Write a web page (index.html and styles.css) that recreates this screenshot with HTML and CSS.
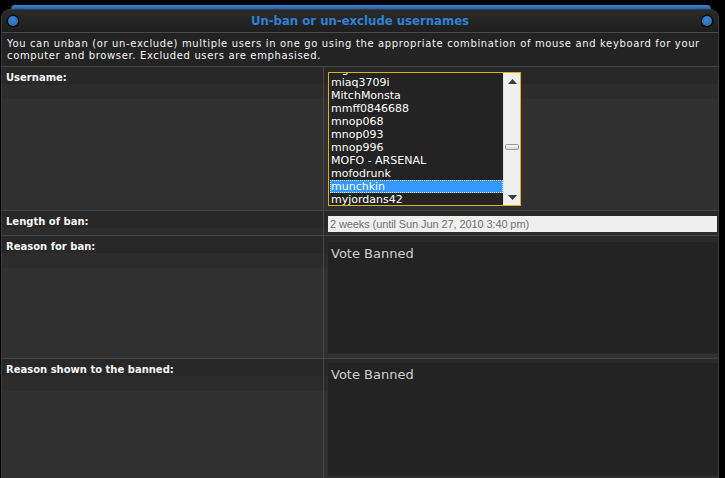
FILE: index.html
```html
<!DOCTYPE html>
<html>
<head>
<meta charset="utf-8">
<link rel="stylesheet" href="styles.css">
</head>
<body>
<div class="panel">
  <div class="topline"></div>
  <div class="head">
    <span class="dot"></span>
    <h2 class="title">Un-ban or un-exclude usernames</h2>
    <span class="dot"></span>
  </div>
  <div class="desc">You can unban (or un-exclude) multiple users in one go using the appropriate combination of mouse and keyboard for your computer and browser. Excluded users are emphasised.</div>

  <div class="row row-user">
    <div class="label">Username:</div>
    <div class="value">
      <div class="listbox">
        <div class="items">
          <div class="item first">mgdavies</div>
          <div class="item">miaq3709i</div>
          <div class="item">MitchMonsta</div>
          <div class="item">mmff0846688</div>
          <div class="item">mnop068</div>
          <div class="item">mnop093</div>
          <div class="item">mnop996</div>
          <div class="item">MOFO - ARSENAL</div>
          <div class="item">mofodrunk</div>
          <div class="item selected">munchkin</div>
          <div class="item">myjordans42</div>
        </div>
        <div class="scrollbar">
          <svg class="arrow" width="9" height="5" viewBox="0 0 9 5"><polygon points="0,5 9,5 4.5,0" fill="#3c3c3c"/></svg>
          <div class="track"><div class="thumb"></div></div>
          <svg class="arrow" width="9" height="5" viewBox="0 0 9 5"><polygon points="0,0 9,0 4.5,5" fill="#3c3c3c"/></svg>
        </div>
      </div>
    </div>
  </div>

  <div class="row row-length">
    <div class="label">Length of ban:</div>
    <div class="value">
      <div class="field">2 weeks (until Sun Jun 27, 2010 3:40 pm)</div>
    </div>
  </div>

  <div class="row row-reason">
    <div class="label">Reason for ban:</div>
    <div class="value">
      <div class="textarea">Vote Banned</div>
    </div>
  </div>

  <div class="row row-shown">
    <div class="label">Reason shown to the banned:</div>
    <div class="value">
      <div class="textarea tall">Vote Banned</div>
    </div>
  </div>
</div>
</body>
</html>
```
FILE: styles.css
```css
html, body {
  margin: 0;
  padding: 0;
  background: #000;
  height: 100%;
  overflow: hidden;
}
body {
  font-family: "DejaVu Sans", Verdana, sans-serif;
  color: #fff;
}
.panel {
  width: 718px;
  margin-left: 1px;
}
.topline {
  height: 4px;
  margin: 5px 8px 0 10px;
  background: linear-gradient(#3a86d8, #2461a8);
  border-radius: 5px 5px 0 0;
}
.head {
  box-sizing: border-box;
  height: 24px;
  border: 1px solid #3b3b3b;
  border-bottom-color: #4a4a4a;
  border-radius: 9px 9px 0 0;
  background: linear-gradient(#2b2b2b, #1d1d1d);
  display: flex;
  align-items: center;
  padding: 0 6px 0 6px;
}
.dot {
  width: 10px;
  height: 10px;
  border-radius: 50%;
  background: radial-gradient(circle at 45% 40%, #3a86d6, #2262ad);
  box-shadow: 0 0 0 1.5px #0c0c0c;
  flex: none;
}
.title {
  flex: 1;
  margin: 0;
  text-align: center;
  font-family: "DejaVu Sans Condensed", "DejaVu Sans", sans-serif;
  font-weight: bold;
  font-size: 13px;
  color: #2f80d4;
  line-height: 22px;
}
.desc {
  box-sizing: border-box;
  height: 33px;
  padding: 5px 4px 0 5px;
  background: #232323;
  border-left: 1px solid #3b3b3b;
  border-right: 1px solid #3b3b3b;
  font-size: 10px;
  letter-spacing: 0.64px;
  line-height: 12px;
  color: #f4f4f4;
}
.row {
  display: flex;
  border-top: 1px solid #464646;
  border-left: 1px solid #3b3b3b;
  border-right: 1px solid #3b3b3b;
}
.label, .value {
  background: linear-gradient(to bottom, #282828 0, #282828 17px, #2c2c2c 17px, #2c2c2c 32px, #303030 32px);
}
.label {
  box-sizing: border-box;
  width: 322px;
  flex: none;
  padding: 5px 4px;
  font-size: 10px;
  line-height: 12px;
  font-weight: bold;
  color: #f6f6f6;
  border-right: 1px solid #464646;
}
.value {
  flex: 1;
  box-sizing: border-box;
  padding: 5px 0 4px 4px;
}
.row-user { height: 143px; }
.row-length { height: 24px; }
.row-length .value { padding-top: 5px; }
.row-reason { height: 122px; }
.row-shown { height: 130px; }
.row-shown .value { padding-top: 3px; }

.listbox {
  box-sizing: border-box;
  width: 193px;
  height: 134px;
  border: 1px solid #e3b100;
  background: #232323;
  display: flex;
}
.items {
  flex: 1;
  overflow: hidden;
  padding-left: 1px;
}
.item {
  height: 13px;
  font-size: 11px;
  line-height: 13px;
  color: #fff;
  padding-left: 1px;
  white-space: nowrap;
}
.item.first { margin-top: -10px; }
.item.selected {
  background: #3399ff;
  outline: 1px dotted #fff;
  outline-offset: -1px;
}
.scrollbar {
  width: 17px;
  flex: none;
  background: #efefef;
  border-left: 1px solid #e2e2e2;
  display: flex;
  flex-direction: column;
  align-items: center;
  padding: 6px 0 5px;
  box-sizing: border-box;
}
.arrow { flex: none; display: block; }
.track {
  flex: 1;
  width: 100%;
  display: flex;
  justify-content: center;
  padding-top: 60px;
  box-sizing: border-box;
}
.thumb {
  width: 14px;
  height: 6px;
  box-sizing: border-box;
  border: 1px solid #9a9a9a;
  border-radius: 2px;
  background: linear-gradient(#fafafa, #d6d6d6);
}
.field {
  box-sizing: border-box;
  height: 16px;
  margin-right: 1px;
  background: #efefef;
  font-family: "Liberation Sans", Arial, sans-serif;
  font-size: 11px;
  letter-spacing: -0.1px;
  line-height: 16px;
  color: #727272;
  padding-left: 2px;
}
.textarea {
  box-sizing: border-box;
  height: 112px;
  background: #232323;
  border-top: 1px solid #2b2b2b;
  padding: 4px 3px;
  font-size: 13px;
  line-height: 16px;
  color: #cfcfcf;
}
.textarea.tall { height: 114px; }
```
